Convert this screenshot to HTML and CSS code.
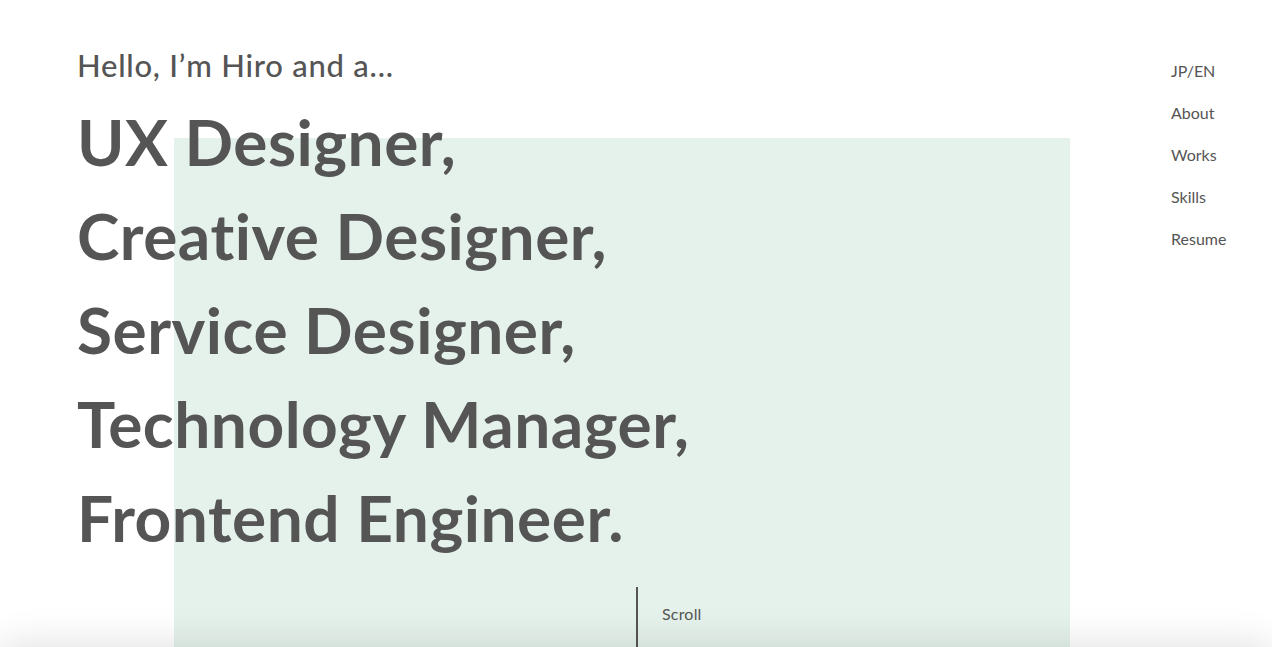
FILE: index.html
```html
<!DOCTYPE html>
<html lang="en">
<head>
<meta charset="utf-8">
<title>Hiro</title>
<link rel="stylesheet" href="styles.css">
</head>
<body>
<div class="page">
  <section class="hero">
    <div class="hero-bg"></div>
    <div class="hero-text">
      <p class="hello">Hello, I’m Hiro and a...</p>
      <h1 class="roles">
        <span class="role">UX Designer,</span>
        <span class="role">Creative Designer,</span>
        <span class="role">Service Designer,</span>
        <span class="role">Technology Manager,</span>
        <span class="role">Frontend Engineer.</span>
      </h1>
    </div>
    <div class="scroll">
      <span class="scroll-line"></span>
      <span class="scroll-label">Scroll</span>
    </div>
  </section>
  <nav class="nav">
    <a class="nav-link" href="#">JP/EN</a>
    <a class="nav-link" href="#">About</a>
    <a class="nav-link" href="#">Works</a>
    <a class="nav-link" href="#">Skills</a>
    <a class="nav-link" href="#">Resume</a>
  </nav>
</div>
<div class="bottom-shade"></div>
</body>
</html>
```

FILE: styles.css
```css
html, body {
  margin: 0;
  padding: 0;
  height: 100%;
  background: #ffffff;
  overflow: hidden;
}
body {
  font-family: "Lato", "Open Sans", sans-serif;
  color: #555555;
}
.page {
  display: flex;
  height: 647px;
}
.hero {
  position: relative;
  flex: 1;
  height: 647px;
}
.hero-bg {
  position: absolute;
  left: 174px;
  top: 138px;
  width: 896px;
  bottom: 0;
  background: #e5f2eb;
}
.hero-text {
  position: relative;
  padding: 45px 0 0 77px;
}
.hello {
  margin: 0;
  font-size: 31px;
  font-weight: 500;
  line-height: 40px;
  letter-spacing: 0.75px;
}
.roles {
  margin: 10px 0 0;
  font-size: 64px;
  font-weight: 700;
  line-height: 94px;
  letter-spacing: 0.5px;
  display: flex;
  flex-direction: column;
}
.role {
  display: block;
}
.scroll {
  position: absolute;
  left: 636px;
  top: 587px;
  bottom: 0;
  display: flex;
  gap: 24px;
}
.scroll-line {
  width: 2px;
  background: #555555;
}
.scroll-label {
  font-size: 16px;
  padding-top: 17px;
  letter-spacing: 0.2px;
}
.nav {
  width: 101px;
  padding-top: 59px;
  display: flex;
  flex-direction: column;
  gap: 18px;
}
.nav-link {
  color: #555555;
  text-decoration: none;
  font-size: 16px;
  line-height: 24px;
}
.bottom-shade {
  position: fixed;
  left: 0;
  right: 0;
  bottom: -60px;
  height: 60px;
  box-shadow: 0 0 40px rgba(0, 0, 0, 0.14);
  background: #ffffff;
}
```
